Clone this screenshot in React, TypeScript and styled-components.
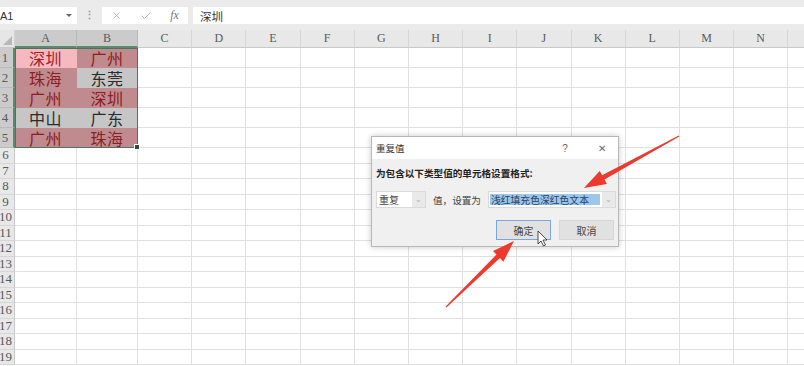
import React from 'react';
import styled, {createGlobalStyle} from 'styled-components';
import {X, Check} from 'lucide-react';

const GlobalStyle = createGlobalStyle`
  html, body {
    margin: 0;
    padding: 0;
    background: #fff;
  }
  body {
    font-family: "Noto Sans CJK SC", "Noto Sans", sans-serif;
  }
`;

const Page = styled.div`
  position: relative;
  width: 804px;
  height: 366px;
  overflow: hidden;
  display: flex;
  flex-direction: column;
  background: #fff;
`;

const Toolbar = styled.div`
  flex: 0 0 30px;
  box-sizing: border-box;
  padding-top: 7px;
  background: #ebebeb;
  display: flex;
  align-items: flex-start;
`;
const NameBox = styled.div`
  width: 77px;
  height: 17px;
  box-sizing: border-box;
  padding-right: 5px;
  background: #fff;
  display: flex;
  align-items: center;
  justify-content: space-between;
  font: 11px "Liberation Sans", sans-serif;
  color: #333;
`;
const DropTriangle = styled.span`
  width: 0;
  height: 0;
  border-left: 3px solid transparent;
  border-right: 3px solid transparent;
  border-top: 3px solid #666;
`;
const Dots = styled.div`
  width: 25px;
  height: 17px;
  display: flex;
  align-items: center;
  justify-content: center;
  color: #999;
  font: bold 11px "Liberation Sans", sans-serif;
`;
const FxBox = styled.div`
  width: 86px;
  height: 17px;
  background: #fff;
  display: flex;
  align-items: center;
  justify-content: space-around;
  color: #9a9a9a;
`;
const Fx = styled.span`
  font: italic 12px "Liberation Serif", serif;
  color: #777;
`;
const Formula = styled.div`
  flex: 1;
  height: 17px;
  margin-left: 5px;
  padding-left: 7px;
  background: #fff;
  display: flex;
  align-items: center;
  font-size: 11.5px;
  color: #333;
`;

const Sheet = styled.div`
  flex: 1;
  display: grid;
  grid-template-columns: 15px 62px 61px repeat(13, 54.2px);
  grid-template-rows: 18px repeat(5, 20px) repeat(14, 15.5px);
`;
const Corner = styled.div`
  grid-row: 1;
  grid-column: 1;
  position: relative;
  background: #e6e6e6;
  border-right: 1px solid #d4d4d4;
  border-bottom: 1px solid #c8c8c8;
  &::after {
    content: '';
    position: absolute;
    right: 2px;
    bottom: 2px;
    border-left: 9px solid transparent;
    border-bottom: 9px solid #b7b7b7;
  }
`;
const ColHead = styled.div<{$sel?: boolean; $c: number}>`
  grid-row: 1;
  grid-column: ${p => p.$c};
  background: ${p => (p.$sel ? '#cbcbcb' : '#e8e8e8')};
  border-right: 1px solid ${p => (p.$sel ? '#b9b9b9' : '#d6d6d6')};
  border-bottom: ${p => (p.$sel ? '2px solid #5c8a6f' : '1px solid #c8c8c8')};
  display: flex;
  align-items: center;
  justify-content: center;
  font: 12px "Liberation Serif", serif;
  color: #5a5a5a;
`;
const RowHead = styled.div<{$sel?: boolean; $r: number}>`
  grid-row: ${p => p.$r};
  grid-column: 1;
  box-sizing: border-box;
  padding-right: 3px;
  background: ${p => (p.$sel ? '#cbcbcb' : '#e8e8e8')};
  border-right: ${p => (p.$sel ? '2px solid #5c8a6f' : '1px solid #c8c8c8')};
  border-bottom: 1px solid ${p => (p.$sel ? '#b9b9b9' : '#d6d6d6')};
  display: flex;
  align-items: center;
  justify-content: center;
  white-space: nowrap;
  font: 13px "Liberation Serif", serif;
  color: #5a5a5a;
`;

type Tone = 'none' | 'active' | 'dup' | 'plain';

const toneBg: Record<Tone, string> = {
  none: '#fff',
  active: '#f5b9bf',
  dup: '#bf8b8e',
  plain: '#c6c6c6',
};
const toneInk: Record<Tone, string> = {
  none: '#222',
  active: '#a3202c',
  dup: '#8c1d22',
  plain: '#2b2b2b',
};

const Cell = styled.div<{$tone: Tone; $r: number; $c: number}>`
  grid-row: ${p => p.$r};
  grid-column: ${p => p.$c};
  background: ${p => toneBg[p.$tone]};
  border-right: 1px solid ${p => (p.$tone === 'none' ? '#e0e0e0' : 'transparent')};
  border-bottom: 1px solid ${p => (p.$tone === 'none' ? '#e0e0e0' : 'transparent')};
  display: flex;
  align-items: center;
  justify-content: center;
  font-size: 16px;
  letter-spacing: 0.5px;
  color: ${p => toneInk[p.$tone]};
`;
const Selection = styled.div`
  grid-column: 2 / 4;
  grid-row: 2 / 7;
  position: relative;
  border: 1px solid #4a7560;
  pointer-events: none;
`;
const FillHandle = styled.span`
  position: absolute;
  right: -3px;
  bottom: -3px;
  width: 4px;
  height: 4px;
  background: #2b4f3c;
  border: 1px solid #fff;
`;

const Dialog = styled.div`
  position: absolute;
  left: 371px;
  top: 136px;
  width: 248px;
  height: 111px;
  box-sizing: border-box;
  border: 1px solid #b8b8b8;
  box-shadow: 0 0 6px rgba(0, 0, 0, 0.22);
  display: flex;
  flex-direction: column;
  background: #f0f0f0;
`;
const TitleBar = styled.div`
  flex: 0 0 22px;
  background: #fff;
  display: flex;
  align-items: center;
  padding: 0 6px 0 4px;
  font-size: 9.5px;
  color: #333;
`;
const TitleText = styled.span`
  flex: 1;
`;
const TitleBtn = styled.span<{$w: number; $gap?: number}>`
  width: ${p => p.$w}px;
  margin-left: ${p => p.$gap ?? 0}px;
  text-align: center;
  font: 10px "Liberation Sans", sans-serif;
  color: #666;
`;
const Body = styled.div`
  flex: 1;
  padding: 8px 4px 6px 4px;
  display: flex;
  flex-direction: column;
`;
const Prompt = styled.div`
  font-size: 9.6px;
  font-weight: bold;
  color: #222;
  line-height: 12px;
  white-space: nowrap;
`;
const FieldRow = styled.div`
  margin-top: 12px;
  display: flex;
  align-items: center;
  font-size: 9.6px;
  color: #444;
  white-space: nowrap;
`;
const Combo = styled.div<{$w: number}>`
  flex: 0 0 ${p => p.$w}px;
  height: 17px;
  box-sizing: border-box;
  display: flex;
  background: #fff;
  border: 1px solid #dadada;
`;
const ComboText = styled.div<{$hl?: boolean}>`
  flex: 1;
  margin: 2px 2px 2px 1px;
  padding-left: 1px;
  display: flex;
  align-items: center;
  font-size: ${p => (p.$hl ? '9.8px' : '10px')};
  background: ${p => (p.$hl ? '#9cc6ea' : 'transparent')};
  color: ${p => (p.$hl ? '#2a4463' : '#444')};
`;
const ComboArrow = styled.div`
  width: 13px;
  background: #e9e9e9;
  display: flex;
  align-items: center;
  justify-content: center;
  color: #aaa;
  font: 8px "Liberation Sans", sans-serif;
`;
const FieldLabel = styled.span`
  margin: 0 7px;
`;
const Buttons = styled.div`
  margin-top: 12px;
  display: flex;
  justify-content: flex-end;
  gap: 8px;
`;
const Button = styled.div<{$focus?: boolean}>`
  width: 55px;
  height: 20px;
  box-sizing: border-box;
  display: flex;
  align-items: center;
  justify-content: center;
  background: #e1e1e1;
  border: 1px solid ${p => (p.$focus ? '#7aa7d6' : '#d6d6d6')};
  font-size: 10px;
  color: #444;
`;

const Overlay = styled.svg`
  position: absolute;
  left: 0;
  top: 0;
  pointer-events: none;
`;

const arrow = (x1: number, y1: number, x2: number, y2: number, shaft = 5, head = 15, headLen = 22) => {
  const len = Math.hypot(x2 - x1, y2 - y1);
  const dx = (x2 - x1) / len;
  const dy = (y2 - y1) / len;
  const nx = -dy;
  const ny = dx;
  const bx = x2 - dx * headLen;
  const by = y2 - dy * headLen;
  const pts = [
    [x1 + nx * 0.6, y1 + ny * 0.6],
    [bx + nx * shaft / 2, by + ny * shaft / 2],
    [bx + nx * head / 2, by + ny * head / 2],
    [x2, y2],
    [bx - nx * head / 2, by - ny * head / 2],
    [bx - nx * shaft / 2, by - ny * shaft / 2],
    [x1 - nx * 0.6, y1 - ny * 0.6],
  ];
  return pts.map(p => p.map(v => v.toFixed(1)).join(',')).join(' ');
};

// last column is only partly on screen, so no label for it
const cols = ['A', 'B', 'C', 'D', 'E', 'F', 'G', 'H', 'I', 'J', 'K', 'L', 'M', 'N', ''];

const data: [string, Tone][][] = [
  [['深圳', 'active'], ['广州', 'dup']],
  [['珠海', 'dup'], ['东莞', 'plain']],
  [['广州', 'dup'], ['深圳', 'dup']],
  [['中山', 'plain'], ['广东', 'plain']],
  [['广州', 'dup'], ['珠海', 'dup']],
];

const App = () => {
  const rows = Array.from({length: 19}, (_, i) => i + 1);

  return (
    <Page>
      <GlobalStyle/>
      <Toolbar>
        <NameBox>
          <span>A1</span>
          <DropTriangle/>
        </NameBox>
        <Dots>⋮</Dots>
        <FxBox>
          <X size={11} strokeWidth={1.4}/>
          <Check size={12} strokeWidth={1.4}/>
          <Fx>fx</Fx>
        </FxBox>
        <Formula>深圳</Formula>
      </Toolbar>

      <Sheet>
        <Corner/>
        {cols.map((c, i) => (
          <ColHead key={i} $c={i + 2} $sel={i < 2}>{c}</ColHead>
        ))}
        {rows.map(r => (
          <React.Fragment key={r}>
            <RowHead $r={r + 1} $sel={r <= 5}>{r}</RowHead>
            {cols.map((_, ci) => {
              const item = r <= 5 && ci < 2 ? data[r - 1][ci] : null;
              return (
                <Cell key={ci} $r={r + 1} $c={ci + 2} $tone={item ? item[1] : 'none'}>
                  {item ? item[0] : ''}
                </Cell>
              );
            })}
          </React.Fragment>
        ))}
        <Selection>
          <FillHandle/>
        </Selection>
      </Sheet>

      <Dialog>
        <TitleBar>
          <TitleText>重复值</TitleText>
          <TitleBtn $w={20}>?</TitleBtn>
          <TitleBtn $w={20} $gap={17}>✕</TitleBtn>
        </TitleBar>
        <Body>
          <Prompt>为包含以下类型值的单元格设置格式:</Prompt>
          <FieldRow>
            <Combo $w={50}>
              <ComboText>重复</ComboText>
              <ComboArrow>⌄</ComboArrow>
            </Combo>
            <FieldLabel>值，设置为</FieldLabel>
            <Combo $w={128}>
              <ComboText $hl>浅红填充色深红色文本</ComboText>
              <ComboArrow>⌄</ComboArrow>
            </Combo>
          </FieldRow>
          <Buttons>
            <Button $focus>确定</Button>
            <Button>取消</Button>
          </Buttons>
        </Body>
      </Dialog>

      <Overlay width={804} height={366} viewBox="0 0 804 366">
        <polygon points={arrow(679, 136, 584, 188)} fill="#ec3a2e"/>
        <polygon points={arrow(446, 307, 514, 241)} fill="#ec3a2e"/>
        <path
          d="M538 231 L538 244 L541 241 L543.5 246 L545.5 245 L543 240 L547 240 Z"
          fill="#fff"
          stroke="#222"
          strokeWidth={0.8}
          strokeLinejoin="round"
        />
      </Overlay>
    </Page>
  );
};

export default App;
